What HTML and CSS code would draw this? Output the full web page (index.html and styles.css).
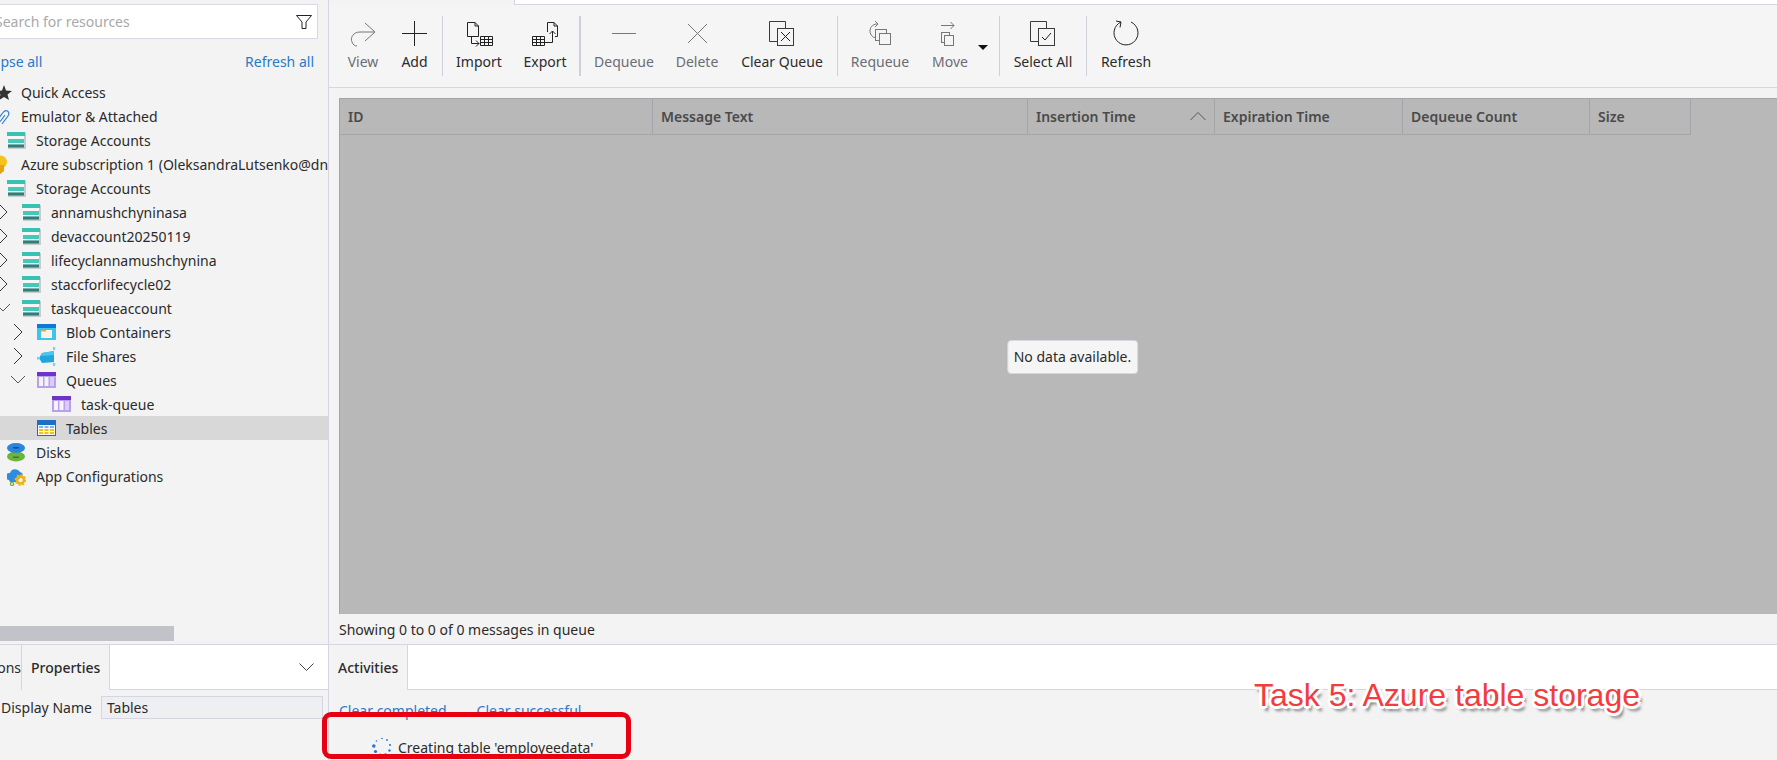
FILE: index.html
```html
<!DOCTYPE html>
<html lang="en">
<head>
    <meta charset="UTF-8">
    <title>Storage Explorer</title>
    <link rel="stylesheet" href="styles.css">
</head>
<body>

<svg class="defs" width="0" height="0">
    <symbol id="i-storage" viewBox="0 0 19 19">
        <rect x="1" y="2" width="18" height="16" fill="#c9cacc"/>
        <rect x="0" y="1" width="18" height="4" fill="#37c2b1"/>
        <rect x="1" y="5" width="16" height="3" fill="#f4f6f6"/>
        <rect x="1" y="8" width="16" height="4" fill="#47c7b5"/>
        <rect x="1" y="12" width="16" height="1.5" fill="#f4f6f6"/>
        <rect x="1" y="13.5" width="16" height="3" fill="#2c7f78"/>
    </symbol>
    <symbol id="i-blob" viewBox="0 0 19 19">
        <rect x="0" y="1" width="19" height="16" fill="#3cc4ec"/>
        <rect x="0" y="1" width="19" height="4" fill="#0f78d4"/>
        <rect x="4" y="7" width="11" height="8" fill="#fdf3e4"/>
        <rect x="4" y="7" width="5" height="1.5" fill="#f2a33a"/>
    </symbol>
    <symbol id="i-file" viewBox="0 0 19 19">
        <path d="M5 6 L17 4 V15 L5 16 L2 11 Z" fill="#1fa6dc"/>
        <path d="M5 6 L17 4 V8 L4 9 Z" fill="#4cc5ee"/>
        <rect x="0" y="10" width="3" height="2.5" fill="#5ddcf5"/>
        <rect x="16" y="0" width="2" height="3" fill="#5ddcf5"/>
        <rect x="16" y="16" width="2" height="3" fill="#5ddcf5"/>
    </symbol>
    <symbol id="i-queue" viewBox="0 0 19 19">
        <rect x="0" y="1" width="19" height="16" fill="#b9a0ee"/>
        <rect x="0" y="1" width="19" height="4" fill="#6d34c6"/>
        <rect x="2" y="6" width="4" height="9" fill="#f5f1fd"/>
        <rect x="7.500" y="6" width="4" height="9" fill="#f5f1fd"/>
        <rect x="13" y="6" width="4" height="9" fill="#d9ccf6"/>
    </symbol>
    <symbol id="i-table" viewBox="0 0 19 19">
        <rect x="0" y="1" width="19" height="16" fill="#1c6fc2"/>
        <rect x="1" y="6" width="17" height="10" fill="#f4f8fc"/>
        <path d="M2 7 h4 v2 h-4z M7.500 7 h4 v2 h-4z M13 7 h4 v2 h-4z" fill="#7db6ea"/>
        <path d="M2 10 h4 v2 h-4z M7.500 10 h4 v2 h-4z M13 10 h4 v2 h-4z M2 13 h4 v2 h-4z M7.500 13 h4 v2 h-4z M13 13 h4 v2 h-4z" fill="#f4c20d"/>
    </symbol>
    <symbol id="i-disk" viewBox="0 0 19 19">
        <ellipse cx="9" cy="13.500" rx="9" ry="5" fill="#6cb33f"/>
        <rect x="6" y="13.500" width="6" height="1.500" fill="#3a7d1e"/>
        <ellipse cx="9" cy="5" rx="9" ry="5" fill="#2a86dc"/>
        <rect x="6" y="4" width="6" height="1.500" fill="#0f4f9a"/>
    </symbol>
    <symbol id="i-config" viewBox="0 0 19 19">
        <path d="M2 13 a3.500 3.500 0 0 1 1 -7 a5.500 5.500 0 0 1 10 -1 a3.500 3.500 0 0 1 3 3 L9 15 H3 Z" fill="#2f8be0"/>
        <circle cx="13.500" cy="13" r="3.500" fill="none" stroke="#f2b310" stroke-width="2.600"/>
        <circle cx="13.500" cy="13" r="5.200" fill="none" stroke="#f2b310" stroke-width="1.400" stroke-dasharray="2 2"/>
        <circle cx="5" cy="17" r="1.600" fill="none" stroke="#72b13a" stroke-width="1.300"/>
    </symbol>
    <symbol id="i-right" viewBox="0 0 16 16">
        <path d="M4 0 L12 8 L4 16" fill="none" stroke="#333" stroke-width="1"/>
    </symbol>
    <symbol id="i-down" viewBox="0 0 16 16">
        <path d="M1 4 L8 11 L15 4" fill="none" stroke="#555" stroke-width="1"/>
    </symbol>
    <symbol id="i-stack" viewBox="0 0 30 30">
        <path d="M10.500 23.500 H2.500 V3.500 H18.500 V10.500" fill="none" stroke="#3a3a3a"/>
        <rect x="10.500" y="10.500" width="16" height="17" fill="#f5f5f5" stroke="#3a3a3a"/>
    </symbol>
</svg>

<div class="app">
    <aside class="explorer">
        <div class="search-row">
            <div class="search">
                <span class="search-text">Search for resources</span>
                <svg class="filter" width="16" height="16" viewBox="0 0 16 16">
                    <path d="M0.500 1.500 H15.500 L10 8 V14.500 L6 14.500 V8 Z" fill="none" stroke="#222"/>
                </svg>
            </div>
        </div>
        <div class="tree-links">
            <a class="link">Collapse all</a>
            <a class="link">Refresh all</a>
        </div>
        <ul class="tree">
            <li class="row l0"><span class="twisty"></span>
                <svg class="ico" viewBox="0 0 19 19"><path d="M12 2 L14 7.500 L20 8 L15.500 11.500 L17 17 L12 14 L7 17 L8.500 11.500 L4 8 L10 7.500 Z" fill="#333"/></svg>
                Quick Access</li>
            <li class="row l0"><span class="twisty"></span>
                <svg class="ico" viewBox="0 0 19 19"><path d="M10 17 L16 9 Q18 6 15.500 4 Q13 3 11 5.500 L6 12 Q5 14 6.500 14.500 Q8 15 9 13.500 L13 8" fill="none" stroke="#2b7fd6" stroke-width="1.200"/></svg>
                Emulator &amp; Attached</li>
            <li class="row l1"><span class="twisty"></span><svg class="ico"><use href="#i-storage"/></svg>Storage Accounts</li>
            <li class="row l0"><span class="twisty"></span>
                <svg class="ico" viewBox="0 0 19 19"><circle cx="8.500" cy="7" r="6.500" fill="#f6c21c"/><path d="M5 10 H12 V16 L8.500 19 L5 16 Z" fill="#e8a410"/></svg>
                Azure subscription 1 (OleksandraLutsenko@dneprovskaya.onmicrosoft.com)</li>
            <li class="row l1"><span class="twisty"></span><svg class="ico"><use href="#i-storage"/></svg>Storage Accounts</li>
            <li class="row l2"><span class="twisty"><svg class="chev"><use href="#i-right"/></svg></span><svg class="ico"><use href="#i-storage"/></svg>annamushchyninasa</li>
            <li class="row l2"><span class="twisty"><svg class="chev"><use href="#i-right"/></svg></span><svg class="ico"><use href="#i-storage"/></svg>devaccount20250119</li>
            <li class="row l2"><span class="twisty"><svg class="chev"><use href="#i-right"/></svg></span><svg class="ico"><use href="#i-storage"/></svg>lifecyclannamushchynina</li>
            <li class="row l2"><span class="twisty"><svg class="chev"><use href="#i-right"/></svg></span><svg class="ico"><use href="#i-storage"/></svg>staccforlifecycle02</li>
            <li class="row l2"><span class="twisty"><svg class="chev"><use href="#i-down"/></svg></span><svg class="ico"><use href="#i-storage"/></svg>taskqueueaccount</li>
            <li class="row l3"><span class="twisty"><svg class="chev"><use href="#i-right"/></svg></span><svg class="ico"><use href="#i-blob"/></svg>Blob Containers</li>
            <li class="row l3"><span class="twisty"><svg class="chev"><use href="#i-right"/></svg></span><svg class="ico"><use href="#i-file"/></svg>File Shares</li>
            <li class="row l3"><span class="twisty"><svg class="chev"><use href="#i-down"/></svg></span><svg class="ico"><use href="#i-queue"/></svg>Queues</li>
            <li class="row l4"><span class="twisty"></span><svg class="ico"><use href="#i-queue"/></svg>task-queue</li>
            <li class="row l3 selected"><span class="twisty"></span><svg class="ico"><use href="#i-table"/></svg>Tables</li>
            <li class="row l1"><span class="twisty"></span><svg class="ico"><use href="#i-disk"/></svg>Disks</li>
            <li class="row l1"><span class="twisty"></span><svg class="ico"><use href="#i-config"/></svg>App Configurations</li>
        </ul>
        <div class="hscroll"><div class="hscroll-thumb"></div></div>
    </aside>

    <main class="queue">
        <div class="tabstrip"><div class="tabstrip-rest"></div></div>
        <div class="toolbar">
            <div class="tool off">
                <svg class="tool-ico" viewBox="0 0 30 30"><path d="M17 5 L27 14 L17 23 M27 14 H12 C5 14 2 20 4 24 C5 27 7 28 9 28" fill="none" stroke="#777"/></svg>
                <span>View</span>
            </div>
            <div class="tool">
                <svg class="tool-ico" viewBox="0 0 30 30"><path d="M2 15.500 H27 M14.500 3 V28" fill="none" stroke="#222"/></svg>
                <span>Add</span>
            </div>
            <div class="sep"></div>
            <div class="tool">
                <svg class="tool-ico" viewBox="0 0 30 30">
                    <path d="M3.500 4.500 H11 L14.500 8 V18.500 H3.500 Z M11 4.500 V8 H14.500 M7.500 18.500 V25.500 H15 M12 22.500 L15 25.500 L12 28.500" fill="none" stroke="#222"/>
                    <path d="M16.500 18.500 H28.500 V27.500 H16.500 Z M20.500 18.500 V27.500 M24.500 18.500 V27.500 M16.500 21.500 H28.500 M16.500 24.500 H28.500" fill="none" stroke="#222"/>
                </svg>
                <span>Import</span>
            </div>
            <div class="tool">
                <svg class="tool-ico" viewBox="0 0 30 30">
                    <path d="M17.500 4.500 H24 L27.500 8 V18.500 H25" fill="none" stroke="#222"/>
                    <path d="M17.500 4.500 V14 M24 4.500 V8 H27.500 M14 24.500 H22.500 V13 M19.500 16 L22.500 13 L25.500 16" fill="none" stroke="#222"/>
                    <path d="M2.500 18.500 H14.500 V27.500 H2.500 Z M6.500 18.500 V27.500 M10.500 18.500 V27.500 M2.500 21.500 H14.500 M2.500 24.500 H14.500" fill="none" stroke="#222"/>
                </svg>
                <span>Export</span>
            </div>
            <div class="sep thick"></div>
            <div class="tool off">
                <svg class="tool-ico" viewBox="0 0 30 30"><path d="M3 15.500 H27" fill="none" stroke="#777"/></svg>
                <span>Dequeue</span>
            </div>
            <div class="tool off">
                <svg class="tool-ico" viewBox="0 0 30 30"><path d="M6 6 L25 25 M25 6 L6 25" fill="none" stroke="#777"/></svg>
                <span>Delete</span>
            </div>
            <div class="tool">
                <svg class="tool-ico" viewBox="0 0 30 30">
                    <use href="#i-stack"/>
                    <path d="M14 14 L23 23 M23 14 L14 23" fill="none" stroke="#222"/>
                </svg>
                <span>Clear Queue</span>
            </div>
            <div class="sep"></div>
            <div class="tool off">
                <svg class="tool-ico" viewBox="0 0 30 30">
                    <path d="M11 20 A6.500 6.500 0 1 1 13 6 M10 3 L13 6 L10 9" fill="none" stroke="#777"/>
                    <rect x="10.500" y="11.500" width="11" height="11" fill="#f5f5f5" stroke="#777"/>
                    <rect x="14.500" y="15.500" width="11" height="11" fill="#f5f5f5" stroke="#777"/>
                </svg>
                <span>Requeue</span>
            </div>
            <div class="tool off">
                <svg class="tool-ico" viewBox="0 0 30 30">
                    <path d="M6 7.500 H19 M15.500 4 L19 7.500 L15.500 11" fill="none" stroke="#777"/>
                    <rect x="6.500" y="14.500" width="8" height="10" fill="#f5f5f5" stroke="#777"/>
                    <rect x="9.500" y="17.500" width="9" height="10" fill="#f5f5f5" stroke="#777"/>
                </svg>
                <span>Move</span>
            </div>
            <div class="tool-caret"></div>
            <div class="sep end"></div>
            <div class="tool">
                <svg class="tool-ico" viewBox="0 0 30 30">
                    <use href="#i-stack"/>
                    <path d="M14 19 L17 22 L23 15" fill="none" stroke="#222"/>
                </svg>
                <span>Select All</span>
            </div>
            <div class="sep"></div>
            <div class="tool">
                <svg class="tool-ico" viewBox="0 0 30 30"><path d="M20 4 A12 12 0 1 1 10 4 M5 3 L10 4 L9 9.500" fill="none" stroke="#222"/></svg>
                <span>Refresh</span>
            </div>
        </div>

        <div class="grid-wrap">
            <div class="grid">
                <div class="grid-head">
                    <div class="cell">ID</div>
                    <div class="cell">Message Text</div>
                    <div class="cell sorted">Insertion Time
                        <svg class="sort" width="16" height="9" viewBox="0 0 16 9"><path d="M0.500 8 L8 0.500 L15.500 8" fill="none" stroke="#555"/></svg>
                    </div>
                    <div class="cell">Expiration Time</div>
                    <div class="cell">Dequeue Count</div>
                    <div class="cell">Size</div>
                </div>
                <div class="no-data">No data available.</div>
            </div>
            <div class="status">Showing 0 to 0 of 0 messages in queue</div>
        </div>
    </main>

    <section class="props">
        <div class="tabs">
            <div class="tab tab-cut">Actions</div>
            <div class="tab">Properties</div>
            <div class="tabs-rest">
                <svg width="15" height="8" viewBox="0 0 15 8"><path d="M0.500 0.500 L7.500 7.500 L14.500 0.500" fill="none" stroke="#444"/></svg>
            </div>
        </div>
        <div class="prop-row">
            <span class="prop-name">Display Name</span>
            <span class="prop-value">Tables</span>
        </div>
    </section>

    <section class="activities">
        <div class="tabs">
            <div class="tab">Activities</div>
            <div class="tabs-rest"></div>
        </div>
        <div class="activity-links">
            <a class="link">Clear completed</a>
            <a class="link">Clear successful</a>
        </div>
        <div class="activity">
            <svg width="20" height="20" viewBox="0 0 20 20">
                <g fill="#1f78d1">
                    <circle cx="10" cy="1.500" r="0.800"/>
                    <circle cx="15" cy="3" r="0.900"/>
                    <circle cx="18" cy="8" r="1"/>
                    <circle cx="17.500" cy="13.500" r="1.200"/>
                    <circle cx="13.500" cy="17.500" r="1.300"/>
                    <circle cx="8" cy="18" r="1.500"/>
                    <circle cx="3.500" cy="14.500" r="1.600"/>
                    <circle cx="1.800" cy="9" r="1.800"/>
                    <circle cx="4.500" cy="4" r="0.800"/>
                </g>
            </svg>
            <span>Creating table 'employeedata'</span>
        </div>
    </section>
</div>

<div class="note-box"></div>
<div class="note-text">Task 5: Azure table storage</div>

</body>
</html>
```

FILE: styles.css
```css
html, body {
    margin: 0;
    height: 100%;
    overflow: hidden;
}
body {
    position: relative;
    font-family: "Noto Sans", "Open Sans", sans-serif;
    font-size: 14px;
    color: #2b2b2b;
    background-color: #f3f3f3;
}
.defs {
    position: absolute;
}
.link {
    color: #2a78c8;
}
.app {
    display: grid;
    grid-template-columns: 329px 1fr;
    grid-template-rows: 644px 116px;
    height: 760px;
}

/* left tree */
.explorer {
    border-right: 1px solid #d5d6e0;
    overflow: hidden;
    display: flex;
    flex-direction: column;
}
.search-row {
    padding: 4px 10px 0 0;
}
.search {
    display: flex;
    justify-content: space-between;
    align-items: center;
    height: 33px;
    padding: 0 5px 0 0;
    background-color: #fff;
    border: 1px solid #d9d9e2;
    border-left: none;
}
.search-text {
    margin-left: -5px;
    color: #a9a9a9;
}
.tree-links {
    display: flex;
    justify-content: space-between;
    margin: 13px 14px 0 -32px;
    line-height: 20px;
}
.tree {
    list-style: none;
    margin: 8px 0 0 -38px;
    padding: 0;
    flex: 1;
}
.row {
    display: flex;
    align-items: center;
    height: 24px;
    white-space: nowrap;
    margin-right: -600px;
}
.l1 { padding-left: 15px; }
.l2 { padding-left: 30px; }
.l3 { padding-left: 45px; }
.l4 { padding-left: 60px; }
.selected {
    background-color: #d8d8d8;
}
.twisty {
    display: flex;
    justify-content: center;
    flex: none;
    width: 21px;
    margin-right: 9px;
}
.chev {
    width: 16px;
    height: 16px;
    overflow: visible;
}
.ico {
    flex: none;
    width: 19px;
    height: 19px;
    margin-right: 10px;
    overflow: visible;
}
.hscroll {
    height: 17px;
    margin-bottom: 1px;
}
.hscroll-thumb {
    width: 174px;
    height: 15px;
    background-color: #c2c3c9;
}

/* toolbar and grid */
.queue {
    display: flex;
    flex-direction: column;
    min-width: 0;
}
.tabstrip {
    height: 5px;
    padding-left: 185px;
    flex: none;
}
.tabstrip-rest {
    height: 4px;
    background-color: #fff;
    border-left: 1px solid #d5d6e0;
    border-bottom: 1px solid #d5d6e0;
}
.toolbar {
    display: grid;
    grid-template-columns: 48px 55px 1px 72px 60px 6px 86px 60px 110px 1px 84px 56px 10px 12px 86px 2px 76px;
    align-content: start;
    height: 83px;
    padding: 11px 0 0 10px;
    box-sizing: border-box;
    background-color: #f5f5f5;
    border-bottom: 1px solid #d5d6e0;
    flex: none;
}
.tool {
    display: flex;
    flex-direction: column;
    align-items: center;
    height: 60px;
    white-space: nowrap;
}
.tool-ico {
    width: 30px;
    height: 30px;
    margin-top: 2px;
    margin-bottom: 4px;
    flex: none;
}
.off {
    color: #6c6c74;
}
.sep {
    width: 1px;
    height: 60px;
    background-color: #cfd0da;
}
.sep.thick {
    width: 2px;
    justify-self: end;
}
.sep.end {
    justify-self: end;
}
.tool-caret {
    width: 0;
    height: 0;
    margin: 29px 0 0 0;
    justify-self: center;
    border-left: 5px solid transparent;
    border-right: 5px solid transparent;
    border-top: 5px solid #111;
}
.grid-wrap {
    flex: 1;
    display: flex;
    flex-direction: column;
    padding: 10px 0 0 10px;
    min-height: 0;
}
.grid {
    position: relative;
    flex: none;
    height: 516px;
    width: 1466px;
    box-sizing: border-box;
    background-color: #b8b8b8;
    border-top: 1px solid #a4a4aa;
    border-left: 1px solid #a4a4aa;
}
.grid-head {
    display: grid;
    grid-template-columns: 313px 375px 187px 188px 187px 100px;
    width: max-content;
    height: 36px;
    box-sizing: border-box;
    border-bottom: 1px solid #a4a4aa;
    border-right: 1px solid #a4a4aa;
    font-weight: 600;
    color: #4a4a4a;
}
.cell {
    display: flex;
    align-items: center;
    justify-content: space-between;
    padding: 0 8px 0 8px;
    border-right: 1px solid #a4a4aa;
}
.cell:last-child {
    border-right: none;
}
.no-data {
    position: absolute;
    left: 50%;
    top: 50%;
    transform: translate(-50%, -50%);
    padding: 6px 6px;
    line-height: 20px;
    white-space: nowrap;
    background-color: #f5f5f5;
    border: 1px solid #d5d6e0;
    border-radius: 4px;
}
.status {
    padding-top: 1px;
    line-height: 30px;
    flex: none;
}

/* bottom panels */
.props, .activities {
    border-top: 1px solid #d5d6e0;
    min-width: 0;
}
.props {
    border-right: 1px solid #d5d6e0;
    overflow: hidden;
}
.tabs {
    display: flex;
    height: 45px;
    box-sizing: border-box;
    border-bottom: 1px solid #d5d6e0;
}
.tab {
    display: flex;
    align-items: center;
    padding: 0 9px;
    margin-bottom: -1px;
    background-color: #f3f3f3;
    border-right: 1px solid #d5d6e0;
    font-weight: 500;
}
.tab-cut {
    width: 22px;
    padding: 0;
    justify-content: flex-end;
    box-sizing: border-box;
    font-weight: 400;
    overflow: hidden;
}
.tabs-rest {
    flex: 1;
    display: flex;
    align-items: center;
    justify-content: flex-end;
    padding-right: 14px;
    background-color: #fff;
}
.prop-row {
    display: flex;
    align-items: center;
    gap: 9px;
    padding: 6px 5px 0 0;
}
.prop-name {
    margin-left: 1px;
    white-space: nowrap;
}
.prop-value {
    flex: 1;
    height: 21px;
    line-height: 21px;
    padding-left: 5px;
    background-color: #eeeff3;
    border: 1px solid #d5d6e0;
}
.activity-links {
    display: flex;
    gap: 30px;
    padding: 11px 0 0 10px;
    line-height: 20px;
}
.activity {
    display: flex;
    align-items: center;
    gap: 6px;
    margin: 16px 0 0 43px;
}

/* annotations painted over the screenshot */
.note-box {
    position: absolute;
    left: 322px;
    top: 712px;
    width: 299px;
    height: 37px;
    border: 5px solid #e60012;
    border-radius: 9px;
}
.note-text {
    position: absolute;
    left: 1254px;
    top: 677px;
    font-family: "Liberation Sans", Arial, sans-serif;
    font-size: 32px;
    line-height: 36px;
    white-space: nowrap;
    color: #f43b3e;
    text-shadow: 3px 0 0 #fff, -3px 0 0 #fff, 0 3px 0 #fff, 0 -3px 0 #fff, 2px 2px 0 #fff, -2px 2px 0 #fff, 2px -2px 0 #fff, -2px -2px 0 #fff, 3px 5px 3px #777;
}
```
